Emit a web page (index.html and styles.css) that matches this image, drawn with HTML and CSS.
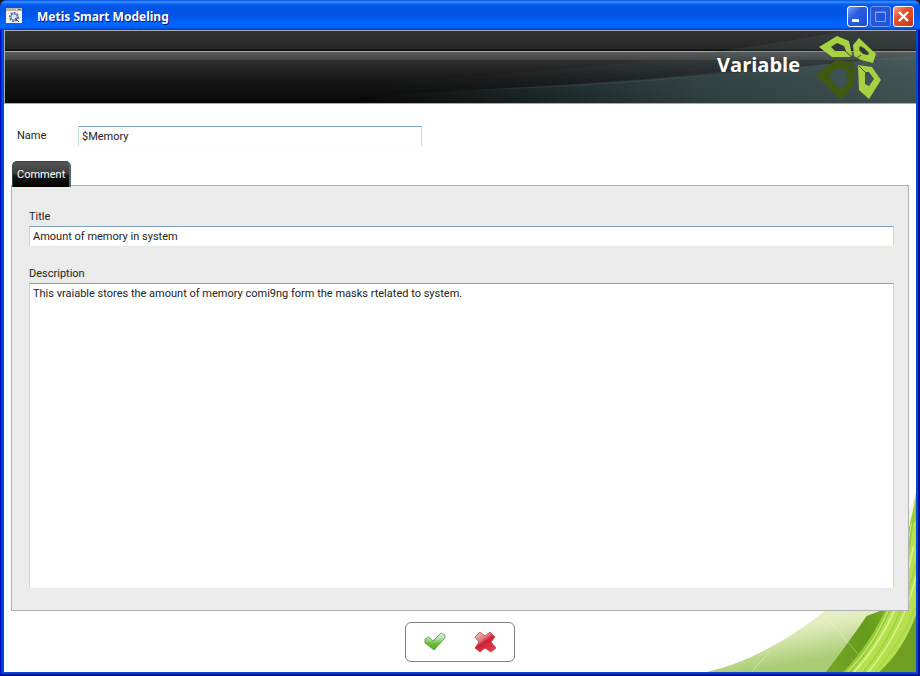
FILE: index.html
```html
<!DOCTYPE html>
<html lang="en">

<head>
    <meta charset="UTF-8">
    <meta name="viewport" content="width=device-width, initial-scale=1.0">
    <title>Metis Smart Modeling</title>
    <link rel="stylesheet" href="styles.css">
</head>

<body>
    <div class="window">
        <div class="titlebar">
            <svg class="app-icon" width="16" height="16" viewBox="0 0 16 16">
                <rect width="16" height="15" fill="#f3f1ec" />
                <rect width="16" height="3" fill="#b9b4aa" />
                <rect x="10" y="1" width="1" height="1" fill="#fff" />
                <rect x="12" y="1" width="3" height="1" fill="#d0382a" />
                <circle cx="8" cy="9" r="4" fill="none" stroke="#53698f" stroke-width="2" stroke-dasharray="2 1" />
                <circle cx="8" cy="9" r="3" fill="#d5e4f2" stroke="#7890b0" />
                <path d="M9 10l4 4" stroke="#3a4a70" stroke-width="1" />
            </svg>
            <span class="caption">Metis Smart Modeling</span>
            <button class="win-btn" type="button" aria-label="Minimize">
                <svg width="19" height="19" viewBox="0 0 19 19"><rect x="4" y="12" width="7" height="3" fill="#fff" /></svg>
            </button>
            <button class="win-btn off" type="button" aria-label="Maximize" disabled>
                <svg width="19" height="19" viewBox="0 0 19 19"><path d="M4.500 5h10v9.500h-10zM4 5.500h11" fill="none" stroke="#86a0f0" stroke-width="1" /></svg>
            </button>
            <button class="win-btn close" type="button" aria-label="Close">
                <svg width="19" height="19" viewBox="0 0 19 19"><path d="M5 5l9 9M14 5l-9 9" stroke="#fff" stroke-width="2.400" /></svg>
            </button>
        </div>

        <div class="header">
            <svg class="glow" viewBox="0 0 912 72" preserveAspectRatio="none">
                <defs>
                    <linearGradient id="teal" x1="0" x2="1">
                        <stop offset="0" stop-color="#2c4444" stop-opacity="0" />
                        <stop offset="0.600" stop-color="#3c5456" stop-opacity="0.600" />
                        <stop offset="1" stop-color="#4c6462" stop-opacity="0.700" />
                    </linearGradient>
                </defs>
                <path d="M360 52Q640 38 840 0H912V72H360z" fill="url(#teal)" opacity="0.400" />
                <path d="M360 64Q640 54 912 24V72H360z" fill="url(#teal)" />
                <path d="M440 60Q660 50 790 32Q680 54 440 60z" fill="#6b8a8c" opacity="0.150" />
            </svg>
            <h1 class="heading">Variable</h1>
            <svg class="logo" width="66" height="66" viewBox="0 0 66 66">
                <path fill="#a8d142" d="M3 11L21 0L33 5L36 19L34 21H16z" />
                <path fill="#a8d142" d="M43 2L60 18L57 27L45 24L38 20L37 9z" />
                <path fill="#a8d142" d="M42 29L56 31L65 44L53 63L43 54z" />
                <path fill="#3f5a10" d="M0 39L20 24L35 26L39 31L38 49L25 64z" />
                <path fill="#33383a" d="M15 11L21 7L28 10L30 15H19zM44 10L43 14L47 18L52 19L53 17L48 12z" />
                <path fill="#3d5254" d="M49 36V48L53 50L58 43L53 36zM12 40L25 54L33 44L29 39L32 33H20z" />
                <path d="M29 15l7 6M45 19l-6 5M32 33l6-6M49 36l-6-6" stroke="#3b4848" stroke-width="1" />
            </svg>
        </div>

        <form class="content">
            <svg class="swoosh" width="216" height="192" viewBox="0 0 648 576">
                <defs>
                    <linearGradient id="pale" x1="0" y1="0" x2="0.200" y2="1">
                        <stop offset="0.650" stop-color="#f3f7de" />
                        <stop offset="0.820" stop-color="#e0ebbb" />
                        <stop offset="1" stop-color="#a9cc74" />
                    </linearGradient>
                    <linearGradient id="deep" x1="0" y1="1" x2="1" y2="0">
                        <stop offset="0" stop-color="#75a526" />
                        <stop offset="0.350" stop-color="#659b1a" />
                        <stop offset="1" stop-color="#a4d33c" />
                    </linearGradient>
                </defs>
                <path d="M20 576Q190 538 375 393Q590 240 648 30V576z" fill="url(#pale)" />
                <path d="M378 576Q430 510 500 408L540 393Q610 260 648 40V576z" fill="url(#deep)" />
                <path d="M155 576L210 512M385 418L520 576" stroke="#fff" stroke-width="3" opacity="0.350" />
                <path d="M430 576Q600 400 648 60V576z" fill="#98cb38" />
                <path d="M455 576Q610 400 640 130L648 120V470L560 576z" fill="#b6e04f" />
                <g fill="none">
                    <path d="M442 576Q590 430 634 130" stroke="#c3e873" stroke-width="4" />
                    <path d="M462 576Q600 430 640 200" stroke="#dcf58f" stroke-width="5" />
                    <path d="M490 576Q600 450 648 250" stroke="#9ccf3a" stroke-width="4" />
                    <path d="M505 576Q610 450 648 290" stroke="#dcf58f" stroke-width="4" />
                    <path d="M526 576Q610 480 648 380" stroke="#a8d845" stroke-width="6" />
                </g>
                <path d="M538 576Q610 510 648 405V576z" fill="#6f9f20" />
            </svg>

            <div class="name-row">
                <label for="name">Name</label>
                <input class="field" id="name" type="text" value="$Memory">
            </div>

            <button class="tab" type="button">Comment</button>
            <div class="panel">
                <label for="title">Title</label>
                <input class="field" id="title" type="text" value="Amount of memory in system">
                <label class="desc-label" for="desc">Description</label>
                <textarea class="field area" id="desc">This vraiable stores the amount of memory comi9ng form the masks rtelated to system.</textarea>
            </div>

            <div class="actions">
                <button class="action" type="button" aria-label="OK">
                    <svg width="22" height="22" viewBox="0 0 22 22">
                        <defs>
                            <linearGradient id="ok" x1="0" y1="0" x2="0" y2="1">
                                <stop offset="0" stop-color="#e4f2e2" />
                                <stop offset="0.350" stop-color="#b4dcaa" />
                                <stop offset="0.600" stop-color="#6fc038" />
                                <stop offset="1" stop-color="#57a528" />
                            </linearGradient>
                        </defs>
                        <path d="M1 8L5 6L9 10L17 2L21 4V7L10 19L1 12z" fill="url(#ok)" stroke="#4d9a4a" stroke-width="0.800" />
                    </svg>
                </button>
                <button class="action" type="button" aria-label="Cancel">
                    <svg width="22" height="22" viewBox="0 0 22 22">
                        <defs>
                            <linearGradient id="no" x1="0" y1="0" x2="0.700" y2="1">
                                <stop offset="0" stop-color="#f6cdd0" />
                                <stop offset="0.400" stop-color="#e07a84" />
                                <stop offset="0.550" stop-color="#cf1f35" />
                                <stop offset="1" stop-color="#dc4050" />
                            </linearGradient>
                        </defs>
                        <path d="M6 1L11 5L16 1L21 6L17 11L22 17L17 21L11 17L6 21L1 17L5 11L1 6z" fill="url(#no)" stroke="#c2404e" stroke-width="0.800" stroke-linejoin="round" />
                    </svg>
                </button>
            </div>
        </form>
    </div>
</body>

</html>
```
FILE: styles.css
```css
* {
    box-sizing: border-box;
}

body {
    margin: 0;
    background: #1c1c1c;
    font-family: Roboto, "Open Sans", sans-serif;
    font-size: 11px;
    line-height: 16px;
    color: #222;
}

button {
    font: inherit;
    padding: 0;
    border: 0;
    background: none;
}

svg {
    display: block;
}

.window {
    display: flex;
    flex-direction: column;
    min-height: 100vh;
    padding: 0 4px 4px;
    border-radius: 7px 7px 0 0;
    background: #0046e0;
    box-shadow: inset 1px 0 #0010b8, inset -2px -2px #00138c, inset 2px 0 #0831d9;
}

/* title bar */
.titlebar {
    display: flex;
    align-items: center;
    gap: 2px;
    height: 30px;
    margin: 0 -4px;
    padding: 2px 6px 0;
    border-radius: 7px 7px 0 0;
    background: linear-gradient(#0050d8 0, #3c90ff 2px, #0560f0 4px, #0054e3 8px, #0055e8 15px, #0066ff 24px, #0064fa 27px, #003dd0 30px);
}

.caption {
    flex: 1;
    margin-left: 13px;
    padding-top: 2px;
    font-family: "Noto Sans", sans-serif;
    font-size: 12px;
    font-weight: bold;
    color: #fff;
    text-shadow: 1px 1px #0a1883;
}

.win-btn {
    width: 21px;
    height: 21px;
    border: 1px solid #fff;
    border-radius: 3px;
    background: linear-gradient(135deg, #7ba0f5, #2a5be0 40%, #2558dc 70%, #1d49c8);
}

.win-btn.off {
    border-color: #6f96f3;
    background: #2456dc;
}

.win-btn.close {
    background: linear-gradient(135deg, #f0a088, #e2502c 40%, #d8441c 75%, #b83010);
}

/* header */
.header {
    position: relative;
    display: flex;
    align-items: center;
    justify-content: flex-end;
    gap: 16px;
    height: 74px;
    padding: 0 34px 0 0;
    border: 1px solid #aaa;
    border-right: 0;
    background: linear-gradient(#333 0, #272727 18px, #0c0c0c 19px, #0c0c0c 20px, #aaa 20px, #aaa 21px, #5c5c5c 21px, #454545 29px, #303030 29px, #181818 48px, #070707 72px);
}

.glow {
    position: absolute;
    inset: 0;
    width: 100%;
    height: 100%;
}

.heading {
    position: relative;
    margin: 0;
    padding-bottom: 4px;
    font-family: "Open Sans", "Noto Sans", sans-serif;
    font-size: 20px;
    line-height: 28px;
    color: #fff;
}

.logo {
    position: relative;
    margin-top: 4px;
}

/* form */
.content {
    position: relative;
    flex: 1;
    display: flex;
    flex-direction: column;
    align-items: flex-start;
    padding: 22px 7px 10px;
    background: #fff;
}

.swoosh {
    position: absolute;
    right: 0;
    bottom: 0;
}

.field {
    display: block;
    width: 100%;
    height: 20px;
    padding: 0 3px;
    border: 1px solid #c1dcc4;
    border-top-color: #7c9fc4;
    border-bottom-color: #fcfcec;
    outline: 0;
    background: #fff;
    font: inherit;
    color: #222;
}

.name-row {
    display: flex;
    align-items: center;
    width: 100%;
    padding-left: 6px;
}

.name-row label {
    width: 61px;
}

.name-row .field {
    width: 344px;
}

.tab {
    position: relative;
    z-index: 1;
    height: 26px;
    margin: 15px 0 -2px 1px;
    padding: 0 4px;
    border: 1px solid #33444a;
    border-right: 2px solid #55686e;
    border-bottom: 0;
    border-radius: 5px 5px 0 0;
    background: linear-gradient(#555 0, #3c3c3c 12px, #1c1c1c 13px, #000);
    color: #fff;
}

.panel {
    position: relative;
    flex: 1;
    display: flex;
    flex-direction: column;
    width: 100%;
    padding: 23px 14px 22px 17px;
    border: 1px solid #b0b0b0;
    background: #ebebeb;
}

.panel label {
    margin-bottom: 1px;
}

.panel .desc-label {
    margin-top: 20px;
}

.area {
    flex: 1;
    padding: 2px 3px;
    resize: none;
}

.actions {
    position: relative;
    display: flex;
    align-self: center;
    align-items: center;
    justify-content: center;
    gap: 28px;
    width: 110px;
    height: 40px;
    margin-top: 11px;
    border: 1px solid #808080;
    border-radius: 6px;
    background: #fff;
}
```
